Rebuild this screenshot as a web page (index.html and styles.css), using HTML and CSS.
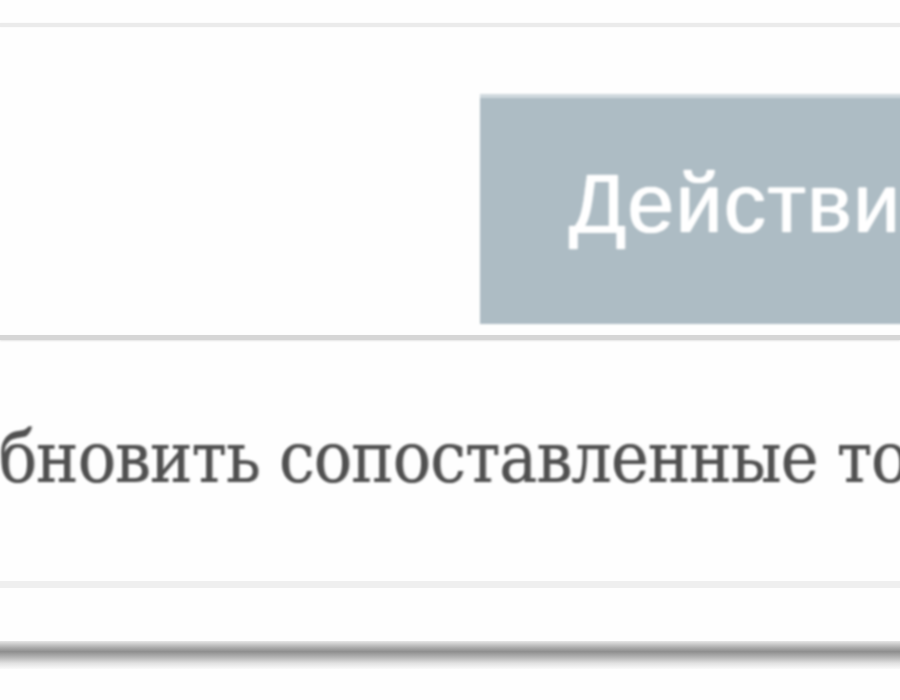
FILE: index.html
```html
<!DOCTYPE html>
<html lang="ru">
<head>
<meta charset="utf-8">
<link rel="stylesheet" href="styles.css">
</head>
<body>
<div class="page">
  <div class="rule rule-top"></div>
  <div class="toolbar">
    <div class="action-btn">Действия</div>
  </div>
  <div class="rule rule-mid"></div>
  <div class="item-row">
    <span class="item-text">Обновить сопоставленные товары</span>
  </div>
  <div class="rule rule-low"></div>
  <div class="footer-gap"></div>
  <div class="shadow"></div>
</div>
</body>
</html>
```
FILE: styles.css
```css
html, body {
  margin: 0;
  padding: 0;
  background: #fefefe;
  overflow: hidden;
  width: 900px;
  height: 700px;
}
.page {
  width: 900px;
  padding-top: 23px;
  overflow: hidden;
}
.rule {
  width: 100%;
}
.rule-top {
  height: 4px;
  background: #ebebeb;
  box-shadow: 0 0 2px #f2f2f2;
}
.toolbar {
  height: 308px;
  display: flex;
  align-items: flex-start;
  padding-top: 67px;
  box-sizing: border-box;
  padding-left: 480px;
}
.action-btn {
  height: 230px;
  width: 460px;
  flex: none;
  box-sizing: border-box;
  background: #adbcc4;
  border-top: 4px solid #cfd8dd;
  color: #ffffff;
  font-family: "Liberation Sans", Arial, sans-serif;
  font-size: 84px;
  letter-spacing: 1.4px;
  line-height: 210px;
  padding-left: 89px;
  white-space: nowrap;
  overflow: hidden;
  text-shadow: 0 0 1px #ffffff, 1px 0 1px rgba(255,255,255,0.8), -1px 0 1px rgba(255,255,255,0.5);
  filter: blur(0.8px);
}
.rule-mid {
  height: 5px;
  background: #d6d6d6;
  box-shadow: 0 1px 2px #e4e4e4;
}
.item-row {
  height: 241px;
  display: flex;
  align-items: center;
  white-space: nowrap;
}
.item-text {
  margin-left: -53px;
  margin-top: -6px;
  font-family: "DejaVu Serif Condensed", "DejaVu Serif", serif;
  font-stretch: condensed;
  font-size: 71px;
  letter-spacing: -1px;
  color: #505050;
  text-shadow: 1px 0 1px rgba(80,80,80,0.5);
  filter: blur(0.9px);
}
.rule-low {
  height: 7px;
  background: #efefef;
}
.footer-gap {
  height: 53px;
}
.shadow {
  height: 28px;
  background: linear-gradient(to bottom, #e6e6e6 0%, #a8a8a8 25%, #8e8e8e 38%, #b8b8b8 60%, #e2e2e2 80%, #fafafa 100%);
}
```
